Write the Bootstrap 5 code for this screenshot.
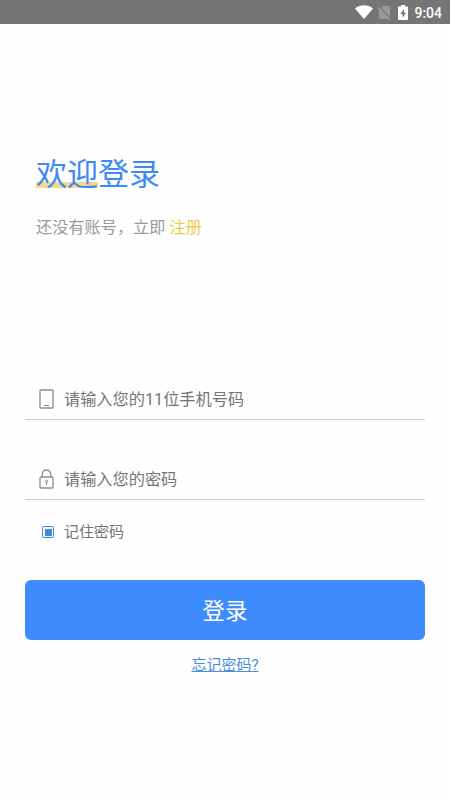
<!DOCTYPE html>
<html lang="zh-CN">
<head>
    <meta charset="UTF-8">
    <meta name="viewport" content="width=device-width, initial-scale=1.0">
    <title>登录</title>
    <link rel="stylesheet" href="https://cdn.jsdelivr.net/npm/bootstrap@5.3.0/dist/css/bootstrap.min.css">
    <style>
        body {
            background-color: #fefefe;
            font-family: Roboto, 'Noto Sans CJK SC', sans-serif;
            color: #757575;
            min-height: 100vh;
        }
        .status-bar {
            height: 24px;
            background-color: #757575;
            padding-right: 8px;
        }
        .status-time {
            font-size: 14px;
            font-weight: 500;
            line-height: 24px;
            margin-left: 6px;
            padding-top: 1px;
        }
        .welcome {
            padding: 128px 36px 0;
        }
        .welcome-title {
            font-size: 31px;
            line-height: 46px;
            font-weight: 400;
            color: #3d8af7;
        }
        .title-mark {
            background: linear-gradient(#f4d98b, #f4d98b) 0 30px / 100% 6px no-repeat;
            display: inline-block;
        }
        .welcome-text {
            font-size: 16.2px;
            line-height: 24px;
            margin-top: 18px;
            color: #999;
        }
        .register-link {
            color: #ecca4f;
        }
        .login-form {
            padding: 140px 25px 0;
        }
        .field-row {
            height: 40px;
            border-bottom: 1px solid #cdcdcd;
            padding-left: 14px;
        }
        .field-row svg {
            margin-bottom: 2px;
        }
        .field-row + .field-row {
            margin-top: 40px;
        }
        .field-row .form-control {
            font-size: 16.2px;
            line-height: 24px;
            margin-left: 10px;
            color: #757575;
        }
        .field-row .form-control::placeholder {
            color: #757575;
            opacity: 1;
        }
        .remember-row {
            margin-top: 20px;
            padding-left: 17px;
            font-size: 15px;
            line-height: 24px;
        }
        .remember-row .form-check-input {
            width: 12px;
            height: 12px;
            border: 1px solid #4a90e2;
            border-radius: 1px;
        }
        .remember-row .form-check-input:checked {
            background: #3f87df content-box;
            padding: 1.5px;
        }
        .remember-row label {
            margin-left: 10px;
        }
        .btn-login {
            height: 60px;
            margin-top: 36px;
            padding: 9px 12px 6px;
            border: 0;
            border-radius: 6px;
            background-color: #3d8bff;
            color: #fff;
            font-size: 22.4px;
        }
        .forgot-link {
            margin-top: 13px;
            font-size: 15px;
            line-height: 24px;
            color: #4a8ce0;
        }
    </style>
</head>
<body>
    <div class="status-bar d-flex align-items-center justify-content-end text-white">
        <svg width="18" height="14" viewBox="0 0 18 14"><path d="M0 3.4C5-.8 13-.8 18 3.4L9 14z" fill="#fff"/></svg>
        <svg class="ms-1" width="15" height="15" viewBox="0 0 15 15">
            <path d="M6 1h7v13H2V5z" fill="#999"/>
            <path d="M1 1.5l13 13" stroke="#757575" stroke-width="2.4"/>
            <path d="M1 2.5l12 12" stroke="#a5a5a5" stroke-width="1.1"/>
        </svg>
        <svg width="10" height="15" viewBox="0 0 10 15" style="margin-left: 6px">
            <path d="M3 0h4v1.5h2.2q.8 0 .8.8v11.9q0 .8-.8.8H.8q-.8 0-.8-.8V2.3q0-.8.8-.8H3z" fill="#fff"/>
            <path d="M6 4L2.4 9h2.2v4L8 7.8H6z" fill="#757575"/>
        </svg>
        <span class="status-time">9:04</span>
    </div>

    <div class="welcome">
        <h1 class="welcome-title mb-0"><span class="title-mark">欢迎</span>登录</h1>
        <p class="welcome-text mb-0">还没有账号，立即 <a href="#" class="register-link text-decoration-none">注册</a></p>
    </div>

    <form class="login-form">
        <div class="field-row d-flex align-items-center">
            <svg class="flex-shrink-0" width="15" height="20" viewBox="0 0 15 20" fill="none" stroke="#8c8c8c">
                <rect x="1" y="1" width="13" height="18" rx=".8" stroke-width="1.3"/>
                <path d="M5 16.5h5"/>
            </svg>
            <input type="tel" class="form-control border-0 bg-transparent shadow-none p-0" placeholder="请输入您的11位手机号码">
        </div>
        <div class="field-row d-flex align-items-center">
            <svg class="flex-shrink-0" width="15" height="20" viewBox="0 0 15 20" fill="none" stroke="#8c8c8c" stroke-width="1.3">
                <rect x="1" y="8" width="13" height="11" rx="1.2"/>
                <path d="M3.3 8V5.2a4.2 4.2 0 0 1 8.4 0V8"/>
                <circle cx="7.5" cy="12.4" r="1.2" stroke-width="1"/>
                <path d="M7.5 13.5v2.5" stroke-width="1"/>
            </svg>
            <input type="password" class="form-control border-0 bg-transparent shadow-none p-0" placeholder="请输入您的密码">
        </div>
        <div class="remember-row d-flex align-items-center">
            <input type="checkbox" class="form-check-input m-0" id="remember" checked>
            <label for="remember">记住密码</label>
        </div>
        <button type="button" class="btn btn-login w-100">登录</button>
        <div class="text-center">
            <a href="#" class="forgot-link d-inline-block">忘记密码?</a>
        </div>
    </form>

    <script src="https://cdn.jsdelivr.net/npm/bootstrap@5.3.0/dist/js/bootstrap.bundle.min.js"></script>
</body>
</html>
